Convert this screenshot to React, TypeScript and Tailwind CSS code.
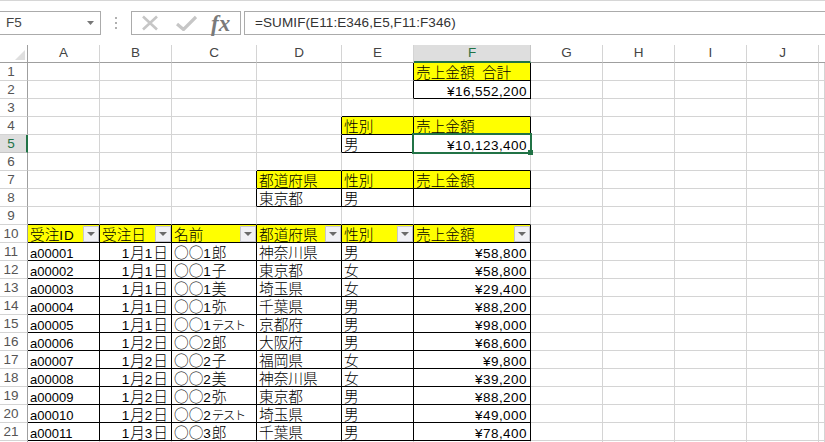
import React from "react";

const widths = [72, 72, 85, 85, 72, 117, 72, 72, 72, 72, 6];
const cols = "ABCDEFGHIJ".split("");

type Cell = { v?: string; right?: boolean; fill?: boolean; box?: boolean; filter?: boolean };

const rowsData = [
  ["a00001", "1月1日", "○○1郎", "神奈川県", "男", "¥58,800"],
  ["a00002", "1月1日", "○○1子", "東京都", "女", "¥58,800"],
  ["a00003", "1月1日", "○○1美", "埼玉県", "女", "¥29,400"],
  ["a00004", "1月1日", "○○1弥", "千葉県", "男", "¥88,200"],
  ["a00005", "1月1日", "○○1テスト", "京都府", "男", "¥98,000"],
  ["a00006", "1月2日", "○○2郎", "大阪府", "男", "¥68,600"],
  ["a00007", "1月2日", "○○2子", "福岡県", "女", "¥9,800"],
  ["a00008", "1月2日", "○○2美", "神奈川県", "女", "¥39,200"],
  ["a00009", "1月2日", "○○2弥", "東京都", "男", "¥88,200"],
  ["a00010", "1月2日", "○○2テスト", "埼玉県", "男", "¥49,000"],
  ["a00011", "1月3日", "○○3郎", "千葉県", "男", "¥78,400"],
];

function buildGrid(): Cell[][] {
  const g: Cell[][] = Array.from({ length: 23 }, () => Array.from({ length: 11 }, () => ({} as Cell)));
  const set = (r: number, c: number, cell: Cell) => {
    g[r][c] = { box: true, ...cell };
  };
  set(1, 5, { v: "売上金額\u2002合計", fill: true });
  set(2, 5, { v: "¥16,552,200", right: true });
  set(4, 4, { v: "性別", fill: true });
  set(4, 5, { v: "売上金額", fill: true });
  set(5, 4, { v: "男" });
  set(5, 5, { v: "¥10,123,400", right: true });
  set(7, 3, { v: "都道府県", fill: true });
  set(7, 4, { v: "性別", fill: true });
  set(7, 5, { v: "売上金額", fill: true });
  set(8, 3, { v: "東京都" });
  set(8, 4, { v: "男" });
  set(8, 5, {});
  ["受注ID", "受注日", "名前", "都道府県", "性別", "売上金額"].forEach((v, c) =>
    set(10, c, { v, fill: true, filter: true })
  );
  rowsData.forEach((row, i) =>
    row.forEach((v, c) => set(11 + i, c, { v, right: c === 1 || c === 5 }))
  );
  return g;
}

const grid = buildGrid();

function Txt({ s }: { s: string }) {
  const parts = s.match(/[\x20-\x7e¥]+|[\u30a0-\u30ff]+|[^\x20-\x7e¥\u30a0-\u30ff]+/g) ?? [];
  const pureAscii = parts.length === 1;
  const isAmount = s.startsWith("¥");
  return (
    <span>
      {parts.map((p, i) =>
        /^[\x20-\x7e¥]/.test(p) ? (
          <span
            key={i}
            className={
              isAmount
                ? "font-['Liberation_Sans',sans-serif] text-[13.5px] tracking-[0.45px]"
                : pureAscii
                  ? "font-['Liberation_Sans',sans-serif] text-[13px]"
                  : "font-['Liberation_Sans',sans-serif] text-[13.5px] tracking-[1px]"
            }
          >
            {p}
          </span>
        ) : /^[\u30a0-\u30ff]/.test(p) ? (
          <span key={i} className="font-['Noto_Sans_CJK_JP',sans-serif] font-light text-[12.5px] tracking-[-1.5px]">
            {p}
          </span>
        ) : (
          <span key={i} className="font-['Noto_Sans_CJK_JP',sans-serif] font-light text-[14.67px]">
            {p}
          </span>
        )
      )}
    </span>
  );
}

function Filter() {
  return (
    <span className="absolute right-0 top-[1px] bottom-0 w-[16px] bg-[#f1f1f5] border border-[#c6c6cc] flex items-center justify-center">
      <svg width="8" height="4" viewBox="0 0 8 4">
        <path d="M0 0h8L4 4z" fill="#6a6a6a" />
      </svg>
    </span>
  );
}

export default function App() {
  return (
    <div className="w-[825px] h-[442px] overflow-hidden bg-white font-['Liberation_Sans',sans-serif] relative">
      {/* formula bar */}
      <div className="h-[45px] border-t border-[#d6d6d6] flex items-start pt-[10px]">
        <div className="w-[101px] h-[24px] border border-l-0 border-[#ababab] flex items-center justify-between pl-[6px] pr-[6px] text-[13.5px] text-[#444]">
          <span>F5</span>
          <svg width="7" height="4" viewBox="0 0 7 4">
            <path d="M0 0h7L3.5 4z" fill="#777" />
          </svg>
        </div>
        <div className="w-[30px] h-[24px] flex flex-col items-center justify-center gap-[3px]">
          <span className="w-[2px] h-[2px] bg-[#b0b0b0]" />
          <span className="w-[2px] h-[2px] bg-[#b0b0b0]" />
          <span className="w-[2px] h-[2px] bg-[#b0b0b0]" />
        </div>
        <div className="w-[110px] h-[24px] border border-[#ababab] flex items-center pl-[9px]">
          <svg width="18" height="16" viewBox="0 0 18 16">
            <path d="M2 1.5L16 14.5M16 1.5L2 14.5" stroke="#c6c6c6" strokeWidth="2.6" fill="none" />
          </svg>
          <svg className="ml-[17px]" width="21" height="16" viewBox="0 0 21 16">
            <path d="M1 9l6.5 5.5L20 2" stroke="#c6c6c6" strokeWidth="3.2" fill="none" />
          </svg>
          <span className="ml-[14px] font-['Liberation_Serif',serif] italic font-bold text-[23px] leading-none text-[#7a7a7a]">fx</span>
        </div>
        <div className="ml-[3px] flex-1 h-[24px] border border-r-0 border-[#ababab] flex items-center pl-[10px] pt-[1px] text-[13.5px] text-[#333] tracking-[0.1px]">
          =SUMIF(E11:E346,E5,F11:F346)
        </div>
      </div>

      {/* column headers */}
      <div className="flex h-[18px]">
        <div className="w-[28px] h-full border-r border-b border-[#9f9f9f] flex items-end justify-end pr-[2px] pb-[2px]">
          <svg width="10" height="10" viewBox="0 0 10 10">
            <path d="M10 0v10H0z" fill="#dfdfdf" />
          </svg>
        </div>
        {cols.map((c, i) => (
          <div
            key={c}
            style={{ width: widths[i] }}
            className={
              c === "F"
                ? "h-full bg-[#dedede] border-b-2 border-[#217346] border-r border-r-[#c6c6c6] flex items-center justify-center text-[13.5px] text-[#217346]"
                : "h-full border-r border-[#d4d4d4] border-b border-b-[#9f9f9f] flex items-center justify-center text-[13.5px] text-[#444]"
            }
          >
            {c}
          </div>
        ))}
        <div className="flex-1 border-b border-[#9f9f9f]" />
      </div>

      {/* rows */}
      {grid.slice(1).map((row, idx) => {
        const r = idx + 1;
        return (
          <div key={r} className="flex h-[18px]">
            <div
              className={
                r === 5
                  ? "w-[28px] h-full bg-[#dedede] border-r-2 border-[#217346] border-b border-b-[#c6c6c6] flex items-center justify-center pr-[4px] pt-[2px] text-[13.5px] text-[#217346]"
                  : "w-[28px] h-full bg-white border-r border-[#9f9f9f] border-b border-b-[#d4d4d4] flex items-center justify-center pr-[5px] pt-[2px] text-[13.5px] text-[#555]"
              }
            >
              {r < 22 ? r : null}
            </div>
            {row.map((cell, c) => {
              const rb = cell.box || row[c + 1]?.box;
              const bb = cell.box || grid[r + 1]?.[c]?.box;
              return (
                <div
                  key={c}
                  style={{ width: c < 10 ? widths[c] : undefined }}
                  className={[
                    "relative h-full border-r border-b flex items-center whitespace-nowrap leading-none text-black pl-[2px] pr-[3px] pt-[2px]",
                    c === 10 ? "flex-1" : "",
                    rb ? "border-r-black" : "border-r-[#d4d4d4]",
                    bb ? "border-b-black" : "border-b-[#d4d4d4]",
                    cell.fill ? "bg-[#ffff00]" : "",
                    cell.right ? "justify-end" : "justify-start",
                  ].join(" ")}
                >
                  {cell.v ? <Txt s={cell.v} /> : null}
                  {cell.filter ? <Filter /> : null}
                  {r === 5 && c === 5 ? (
                    <>
                      <span className="absolute z-10 -left-[2px] -top-[2px] -right-[2px] -bottom-[2px] border-2 border-[#217346]" />
                      <span className="absolute z-10 -right-[3px] -bottom-[3px] w-[5px] h-[5px] bg-[#217346]" />
                    </>
                  ) : null}
                </div>
              );
            })}
          </div>
        );
      })}
    </div>
  );
}
